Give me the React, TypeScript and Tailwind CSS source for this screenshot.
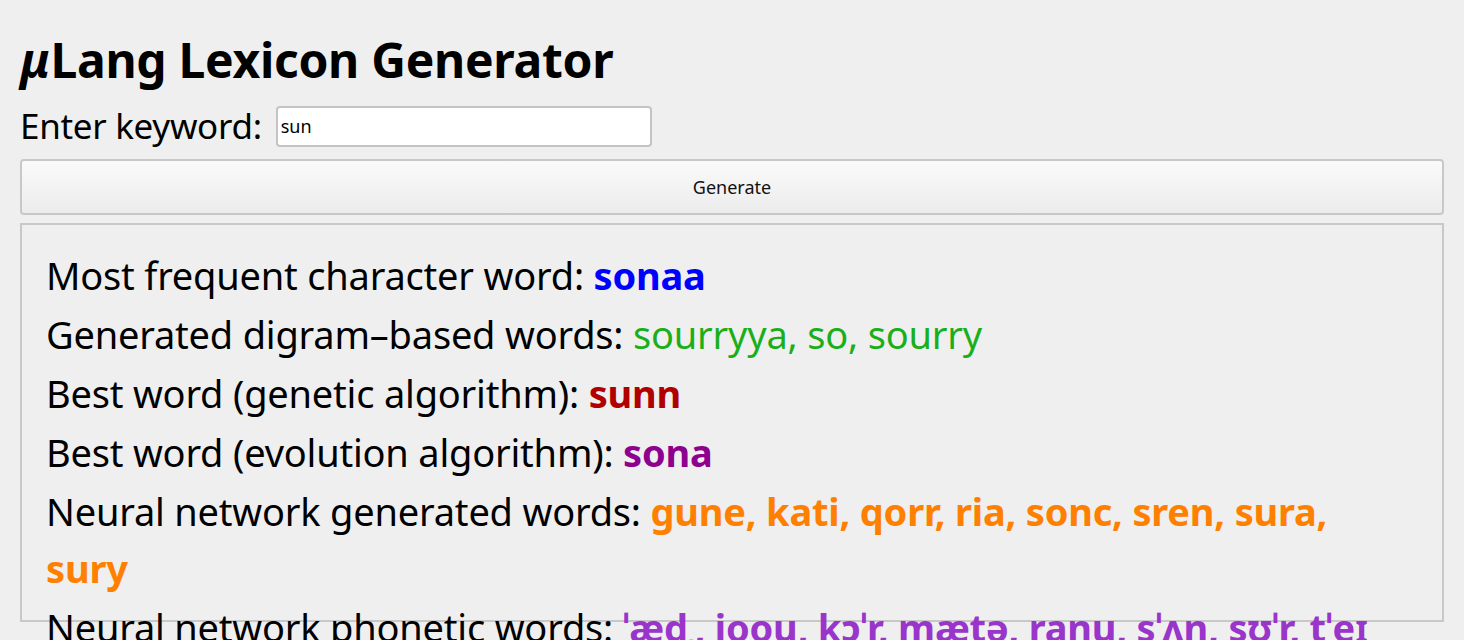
export default function App() {
  const font = { fontFamily: '"Noto Sans", "Open Sans", sans-serif' };
  return (
    <div className="min-h-[640px] bg-[#efefef] px-5 pt-[30px] text-black" style={font}>
      <h1 className="text-[48px] font-bold leading-[60px] tracking-[-0.3px]">
        <i>μ</i>Lang Lexicon Generator
      </h1>
      <div className="mt-[14px] flex items-center gap-[14px]">
        <span className="text-[35px] leading-[44px] tracking-[-0.3px]">Enter keyword:</span>
        <input
          defaultValue="sun"
          className="h-[41px] w-[376px] rounded-[4px] border-2 border-[#c4c4c4] bg-white px-[3px] text-[18px] outline-none"
        />
      </div>
      <button className="mt-[11px] h-[56px] w-full rounded-[4px] border-2 border-[#c8c8c8] bg-gradient-to-b from-[#fafafa] to-[#ececec] text-[18px] text-[#111]">
        Generate
      </button>
      <div className="mt-[8px] flex h-[399px] w-full flex-col gap-[2px] border-2 border-[#c8c8c8] px-[24px] pt-[22px] text-[38px] leading-[57px] tracking-[-0.2px]">
        <div>
          Most frequent character word: <b className="text-[#0000ff]">sonaa</b>
        </div>
        <div>
          Generated digram–based words: <span className="text-[#1aaf1a]">sourryya, so, sourry</span>
        </div>
        <div>
          Best word (genetic algorithm): <b className="text-[#b00000]">sunn</b>
        </div>
        <div>
          Best word (evolution algorithm): <b className="text-[#8e008e]">sona</b>
        </div>
        <div>
          Neural network generated words:{" "}
          <b className="text-[#ff8000]">gune, kati, qorr, ria, sonc, sren, sura, sury</b>
        </div>
        <div>
          Neural network phonetic words:{" "}
          <b className="text-[#9a35cc]">ˈædˌ, joou, kɔˈr, mætə, ranu, sˈʌn, sʊˈr, tˈeɪ</b>
        </div>
      </div>
    </div>
  );
}
